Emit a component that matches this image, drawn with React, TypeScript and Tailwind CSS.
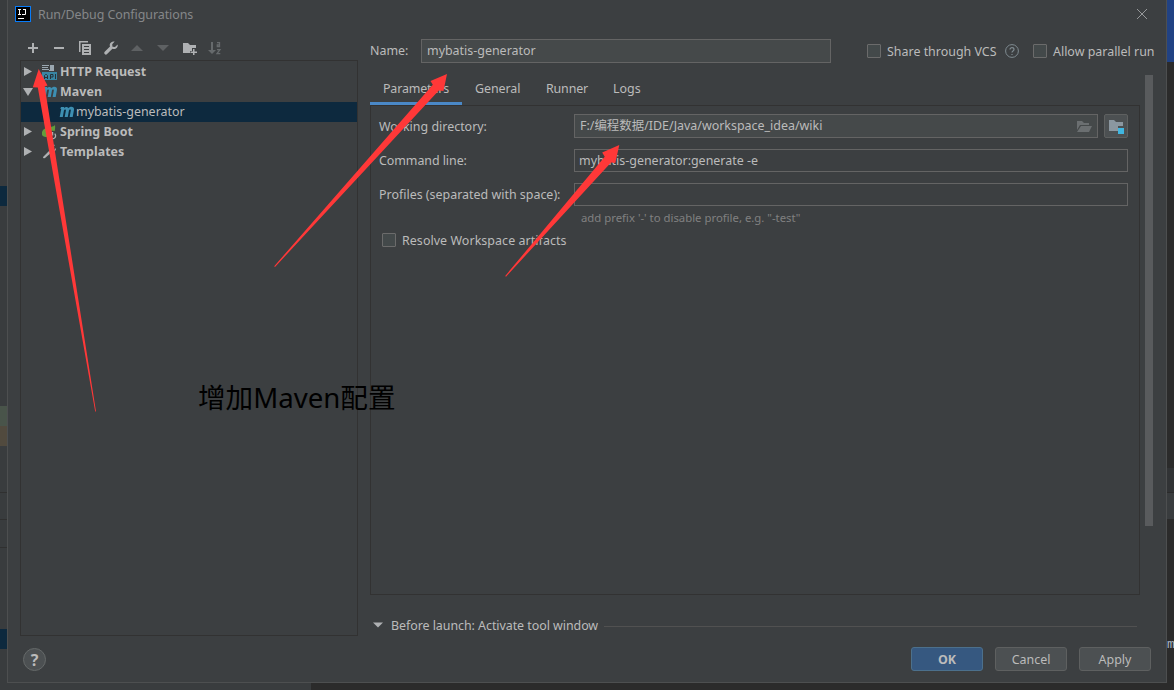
import React from 'react';

type IconProps = { children: React.ReactNode; className?: string; size?: number };

function Icon({ children, className = '', size = 16 }: IconProps) {
  return (
    <svg width={size} height={size} viewBox={`0 0 ${size} ${size}`} className={`block shrink-0 ${className}`}>
      {children}
    </svg>
  );
}

function Logo() {
  return (
    <Icon>
      <rect width="16" height="16" fill="#087cfa" />
      <rect x="1" y="1" width="14" height="14" fill="#000" />
      <path d="M3 3h3v1H5v4h1v1H3V8h1V4H3zM8 3h3v5q0 1-1 1H7V8h3V4H8zM3 12h6v1H3z" fill="#fff" />
    </Icon>
  );
}

function Toolbar() {
  return (
    <div className="flex h-4 items-center gap-[10px] text-[#afb1b3]">
      <Icon><path d="M7 3h2v4h4v2H9v4H7V9H3V7h4z" fill="currentColor" /></Icon>
      <Icon><path d="M3 7h10v2H3z" fill="currentColor" /></Icon>
      <Icon>
        <path d="M2 1h9v1.5H3.5V12H2z" fill="currentColor" />
        <path fillRule="evenodd" d="M5 4h9v11H5zM7 6v1h5V6zm0 3v1h5V9zm0 3v1h5v-1z" fill="currentColor" />
      </Icon>
      <Icon><path d="M14.6 4.5 12 7 9.5 6.7 9.2 4.2l2.5-2.6C9.6.9 6.9 2.4 6.7 4.8c0 .6.1 1.1.3 1.6L1.7 11.7a1.65 1.65 0 0 0 2.4 2.4l5.3-5.3c3 1.2 6-1.4 5.2-4.3z" fill="currentColor" /></Icon>
      <Icon className="text-[#5e6163]"><path d="M2 11 8 5l6 6z" fill="currentColor" /></Icon>
      <Icon className="text-[#5e6163]"><path d="m2 5 6 6 6-6z" fill="currentColor" /></Icon>
      <Icon><path d="M2 3h5l2 2h6v3h-4v3H9v2H2zM12 9h1.500v2.500H16v1.500h-2.500V15H12v-2H9.500v-1.500H12z" fill="currentColor" /></Icon>
      <Icon className="text-[#666a6c]">
        <path d="M4 2h2v8h3l-4 4-4-4h3z" fill="currentColor" />
        <path d="M10 2.700h2.500v4H10.300V5h2M10 9.700h3l-3 4h3.300" fill="none" stroke="currentColor" strokeWidth="1.3" />
      </Icon>
    </div>
  );
}

function ApiIcon() {
  return (
    <Icon>
      <path d="M0 1h7v1H0zm0 2h6v1H0zm0 2h7v1H0zM8 1h4v6H7V6h1z" fill="#9aa7b0" />
      <path d="M0 8h15v8H0z" fill="#3886a3" />
      <path d="M2.500 15v-3.500l1-1h1l1 1V15M2.500 13.500h3M8.500 15v-4.500H11v2.500H8.500M13.500 10v5" fill="none" stroke="#263238" />
    </Icon>
  );
}

function MavenIcon() {
  return (
    <Icon>
      <path d="M2 3h3.200l-.2 1.200C6.200 2.600 8.700 2.600 9.300 4.300c1.800-2.300 6.300-2 5.700 1.500L13.700 13H10.600l1.200-6.500c.2-1.500-1.600-1.200-1.900.2L8.800 13H5.700l1.200-6.500c.2-1.500-1.600-1.200-2 .3L3.800 13H.7L2.200 5H1.300z" fill="#3d8fb2" />
    </Icon>
  );
}

function SpringIcon() {
  return (
    <Icon>
      <path d="M13 1c-2 3-11 1-13 7-1 4 2 5 5 5 5 0 9-4 8-12z" fill="#629d3c" />
      <circle cx="10.500" cy="11.500" r="4.800" fill="#3c3f41" />
      <path d="M8.500 9.600a3 3 0 1 0 4.200 0M10.600 8v3.500" fill="none" stroke="#afb1b3" strokeWidth="1.300" />
    </Icon>
  );
}

function WrenchIcon() {
  return (
    <Icon>
      <path d="m1 13 7-7 2 2-7 6q-2 1-2-1zM7 5c1-3 3-5 6-4l-3 3 .5 1.500L12 6l2-2c0 3-2 5-5 4z" fill="#afb1b3" />
    </Icon>
  );
}

function Disclosure({ open = false }: { open?: boolean }) {
  return <Icon size={10}>{open ? <path d="M0 1h10L5 9z" fill="#afb1b3" /> : <path d="M1 0v9l8-4.500z" fill="#afb1b3" />}</Icon>;
}

function TreeRow({ icon, label, open }: { icon: React.ReactNode; label: string; open?: boolean }) {
  return (
    <div className="flex h-5 items-center pl-[2px] font-bold">
      <Disclosure open={open} />
      <span className="ml-[9px]">{icon}</span>
      <span className="ml-[2px] tracking-[0.05px]">{label}</span>
    </div>
  );
}

function Checkbox() {
  return <span className="block size-[14px] shrink-0 rounded-[1px] border border-[#6b6b6b] bg-[#43494a]" />;
}

function DialogButton({ label, primary = false }: { label: string; primary?: boolean }) {
  return (
    <button className={`flex h-6 w-[72px] items-center justify-center rounded-[3px] border pt-[2px] ${primary ? 'border-[#4c708c] bg-[#365880] font-bold' : 'border-[#5e6060] bg-[#4c5052]'}`}>
      {label}
    </button>
  );
}

function Sidebar() {
  return (
    <aside className="flex w-[338px] shrink-0 flex-col">
      <div className="h-5 pl-[5px]"><Toolbar /></div>
      <div className="h-[576px] border border-[#323232] pt-px">
        <TreeRow icon={<ApiIcon />} label="HTTP Request" />
        <TreeRow icon={<MavenIcon />} label="Maven" open />
        <div className="flex h-5 items-center bg-[#0d293e] pl-[38px]">
          <MavenIcon />
          <span className="ml-px">mybatis-generator</span>
        </div>
        <TreeRow icon={<SpringIcon />} label="Spring Boot" />
        <TreeRow icon={<WrenchIcon />} label="Templates" />
      </div>
    </aside>
  );
}

function NameRow() {
  return (
    <div className="flex h-6 items-center">
      <label className="w-[51px] shrink-0 pb-px">Name:</label>
      <div className="flex h-6 w-[410px] shrink-0 items-center border border-[#646464] bg-[#45494a] pb-px pl-[5px]">mybatis-generator</div>
      <div className="ml-9 flex items-center whitespace-nowrap">
        <Checkbox />
        <span className="ml-[6px] w-[118px] pt-[2px]">Share through VCS</span>
        <Icon size={14}>
          <circle cx="7" cy="7" r="6.400" fill="none" stroke="#7f8b91" />
          <path d="M5 5.500C5 3 9 3 9 5.500 9 7 7 7 7 8.500M7 10v1" fill="none" stroke="#7f8b91" strokeWidth="1.200" />
        </Icon>
        <span className="ml-[14px]"><Checkbox /></span>
        <span className="ml-[6px] pt-[2px]">Allow parallel run</span>
      </div>
    </div>
  );
}

function Parameters() {
  return (
    <div className="h-[490px] w-[770px] border border-[#323232] pl-2 pt-2">
      <div className="flex h-6 items-center">
        <label className="w-[195px] pt-[2px]">Working directory:</label>
        <div className="flex h-6 w-[524px] items-center border border-[#646464] bg-[#45494a] pl-[5px] pr-[5px]">
          <span className="flex-1 pb-px">F:/编程数据/IDE/Java/workspace_idea/wiki</span>
          <Icon><path d="M1 3h5l2 2h5v2H4l-3 5z" fill="#6b6f71" /><path d="M5 8h11l-3 6H1z" fill="#6b6f71" /></Icon>
        </div>
        <button className="ml-[6px] flex size-6 items-center justify-center rounded-[2px] border border-[#5e6060] bg-[#4c5052]">
          <Icon><path d="M1 2h5l2 2h7v4h-5v5H1z" fill="#8b97a0" /><path d="M10 10h6v6h-6z" fill="#40b6e0" /></Icon>
        </button>
      </div>
      <div className="mt-[11px] flex h-[23px] items-center">
        <label className="w-[195px] tracking-[-0.06px]">Command line:</label>
        <div className="flex h-[23px] w-[554px] items-center border border-[#646464] pl-1">mybatis-generator:generate -e</div>
      </div>
      <div className="mt-[11px] flex h-[23px] items-center">
        <label className="w-[195px] whitespace-nowrap">Profiles (separated with space):</label>
        <div className="h-[23px] w-[554px] border border-[#646464]" />
      </div>
      <div className="mt-[2px] h-[18px] pl-[202px] text-[11.35px] text-[#808080]">add prefix '-' to disable profile, e.g. "-test"</div>
      <div className="mt-[6px] flex h-4 items-center gap-[6px] pl-[3px]">
        <Checkbox />
        <span className="pt-[2px] tracking-[0.06px]">Resolve Workspace artifacts</span>
      </div>
    </div>
  );
}

function Editor() {
  return (
    <main className="-mt-px ml-3 w-[784px] shrink-0">
      <NameRow />
      <div className="mt-[10px] flex w-[784px]">
        <div className="w-[770px]">
          <nav className="flex h-[32px] pt-[5px]">
            <span className="h-[27px] w-[92px] border-b-[3px] border-[#4a88c7] pl-[13px] pt-px tracking-[-0.15px]">Parameters</span>
            <span className="ml-[13px] w-[71px] pt-px tracking-[-0.06px]">General</span>
            <span className="w-[67px] pt-px tracking-[-0.15px]">Runner</span>
            <span className="pt-px">Logs</span>
          </nav>
          <Parameters />
          <div className="mt-[20px] flex h-5 items-center pl-[3px]">
            <Icon size={10}><path d="M0 2.500h10L5 7.500z" fill="#afb1b3" /></Icon>
            <span className="ml-2 pt-[2px] tracking-[-0.05px]">Before launch: Activate tool window</span>
            <span className="ml-[6px] mr-[3px] mt-[2px] h-px flex-1 bg-[#515151]" />
          </div>
        </div>
        <div className="ml-[5px] mt-[2px] h-[451px] w-2 bg-[#595b5d]" />
      </div>
    </main>
  );
}

function Annotations() {
  return (
    <div className="pointer-events-none absolute inset-0">
      <svg width="1174" height="690" className="absolute inset-0">
        <g fill="#ff3838">
          <path d="M38.700 69 47.500 85.500 44.700 86.500 96 411.500h-.8L37.800 87.500l-5-.2z" />
          <path d="M447 74 443.500 91 438.800 90.500 275 267l-.8-.8L432.800 84.800 430.500 81z" />
          <path d="M619.300 145 615.300 163 611 162.500 506 276.700l-.8-.8L604.700 156.800 602.200 152.500z" />
        </g>
      </svg>
      <span className="absolute left-[198px] top-[378px] whitespace-nowrap text-[27.6px] leading-[38px] text-black">增加Maven配置</span>
    </div>
  );
}

export default function App() {
  return (
    <div className="relative flex h-[690px] w-[1174px] overflow-hidden bg-[#2b2b2b] font-['Noto_Sans','Noto_Sans_CJK_SC',sans-serif] text-[12.45px] leading-5 text-[#bbbbbb]">
      <div className="flex w-[7px] shrink-0 flex-col bg-[#393c3e]">
        <div className="mt-[186px] h-5 bg-[#0d293e]" />
        <div className="mt-[200px] h-5 bg-[#49544a]" />
        <div className="h-5 bg-[#514a3e]" />
        <div className="mt-[46px] h-px bg-[#303030]" />
        <div className="mt-[26px] h-px bg-[#303030]" />
        <div className="mt-[27px] h-px bg-[#303030]" />
        <div className="mt-[81px] h-5 bg-[#0d293e]" />
      </div>
      <div className="flex w-[1160px] shrink-0 flex-col">
        <section className="h-[683px] border border-t-0 border-[#4d4f50] bg-[#3c3f41]">
          <header className="flex h-7 items-center pl-[7px] text-[#858789]">
            <Logo />
            <span className="ml-[7px] pt-[2px] tracking-[-0.06px]">Run/Debug Configurations</span>
            <Icon size={12} className="ml-auto mr-[18px]"><path d="m1 1 10 10M11 1 1 11" stroke="#96989a" /></Icon>
          </header>
          <div className="flex h-[608px] pl-3 pt-3">
            <Sidebar />
            <Editor />
          </div>
          <footer className="flex h-[46px] items-start pl-[15px] pr-[15px] pt-[11px]">
            <button className="mt-px flex size-[23px] items-center justify-center rounded-full border border-[#656969] bg-[#4c5052] text-[16px] font-bold">?</button>
            <div className="ml-auto flex gap-3">
              <DialogButton label="OK" primary />
              <DialogButton label="Cancel" />
              <DialogButton label="Apply" />
            </div>
          </footer>
        </section>
        <div className="h-[7px] w-[304px] bg-[#393c3e]" />
      </div>
      <div className="flex w-[7px] flex-col overflow-hidden bg-[#2b2b2b]">
        <div className="h-[62px] bg-[#214283]" />
        <div className="mt-[406px] h-6 bg-[#313335]" />
        <div className="mt-px h-[26px] bg-[#393c3e]" />
        <span className="mt-[116px] font-['Liberation_Mono',monospace] text-[13px] text-[#a9b7c6]">m</span>
      </div>
      <Annotations />
    </div>
  );
}
